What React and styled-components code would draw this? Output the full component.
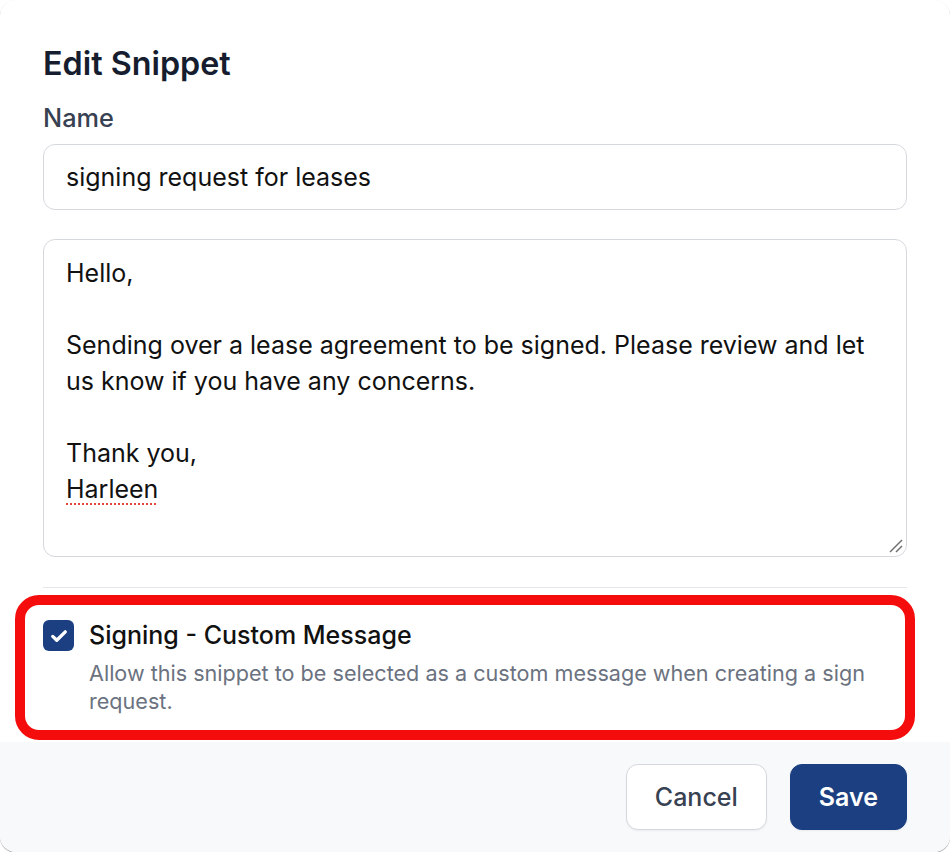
import React from "react";
import styled, { createGlobalStyle } from "styled-components";

const Global = createGlobalStyle`
  html, body { margin: 0; padding: 0; background: #ffffff; }
  body { font-family: Inter, "Noto Sans", sans-serif; -webkit-font-smoothing: antialiased; }
  * { box-sizing: border-box; }
`;

const Card = styled.div`
  width: 950px;
  height: 852px;
  background: #ffffff;
  border-radius: 16px;
  box-shadow: 0 1px 1px rgba(0, 0, 0, 0.35), 0 0 1px rgba(0, 0, 0, 0.06);
  display: flex;
  flex-direction: column;
  overflow: hidden;
`;

const Body = styled.div`
  padding: 44px 43px 27px;
  display: flex;
  flex-direction: column;
`;

const Title = styled.h2`
  margin: 0;
  font-size: 32.3px;
  line-height: 40px;
  font-weight: 600;
  color: #161d2e;
`;

const Label = styled.label`
  margin-top: 18px;
  font-size: 25.3px;
  line-height: 32px;
  font-weight: 500;
  color: #374151;
`;

const TextInput = styled.input`
  margin-top: 10px;
  height: 66px;
  padding: 14px 22px;
  border: 1px solid #d5d8de;
  border-radius: 12px;
  font-family: inherit;
  font-size: 25px;
  line-height: 36px;
  color: #111111;
  background: #fff;
  outline: none;
`;

const MessageBox = styled.div`
  position: relative;
  margin-top: 29px;
  height: 318px;
  padding: 15px 22px;
  border: 1px solid #d5d8de;
  border-radius: 12px;
  font-size: 25px;
  line-height: 36px;
  color: #111111;
  white-space: pre-wrap;
`;

const Misspelled = styled.span`
  text-decoration: underline dotted #e0463c;
  text-decoration-thickness: 2px;
  text-underline-offset: 5px;
`;

const Grip = styled.svg`
  position: absolute;
  right: 2px;
  bottom: 2px;
`;

const Divider = styled.hr`
  margin: 30px 0 0;
  border: 0;
  border-top: 1px solid #e5e7eb;
`;

const OptionBlock = styled.div`
  position: relative;
  margin-top: 31px;
  display: grid;
  grid-template-columns: 31px 1fr;
  column-gap: 15px;
`;

const Highlight = styled.div`
  position: absolute;
  left: -28px;
  right: -8px;
  top: -24px;
  bottom: -25px;
  border: 10px solid #f50d0d;
  border-radius: 24px;
  pointer-events: none;
`;

const CheckBox = styled.span`
  width: 31px;
  height: 31px;
  margin-top: 1px;
  border-radius: 6px;
  background: #1b3f80;
  display: flex;
  align-items: center;
  justify-content: center;
`;

const OptionText = styled.div`
  display: flex;
  flex-direction: column;
  gap: 8px;
`;

const OptionTitle = styled.div`
  font-size: 25px;
  line-height: 32px;
  font-weight: 500;
  color: #111111;
`;

const OptionDesc = styled.div`
  font-size: 21.6px;
  line-height: 28px;
  color: #6b7280;
`;

const Footer = styled.div`
  margin-top: auto;
  background: #f8f9fb;
  padding: 22px 43px;
  display: flex;
  justify-content: flex-end;
  gap: 23px;
`;

const Button = styled.button`
  height: 66px;
  padding: 0 28px;
  border-radius: 12px;
  font-family: inherit;
  font-size: 25px;
  font-weight: ${(p) => (p.$primary ? 600 : 500)};
  color: ${(p) => (p.$primary ? "#ffffff" : "#374151")};
  background: ${(p) => (p.$primary ? "#1b3f80" : "#ffffff")};
  border: 1px solid ${(p) => (p.$primary ? "#1b3f80" : "#d5d8de")};
  box-shadow: 0 1px 2px rgba(0, 0, 0, 0.06);
  cursor: pointer;
`;

export default function App() {
  return (
    <>
      <Global />
      <Card>
        <Body>
          <Title>Edit Snippet</Title>
          <Label htmlFor="snippet-name">Name</Label>
          <TextInput id="snippet-name" defaultValue="signing request for leases" />
          <MessageBox>
            {"Hello,\n\nSending over a lease agreement to be signed. Please review and let us know if you have any concerns.\n\nThank you,\n"}
            <Misspelled>Harleen</Misspelled>
            <Grip width="16" height="16" viewBox="0 0 16 16">
              <line x1="2" y1="14" x2="14" y2="2" stroke="#6e6e6e" strokeWidth="1.5" />
              <line x1="8" y1="14" x2="14" y2="8" stroke="#6e6e6e" strokeWidth="1.5" />
            </Grip>
          </MessageBox>
          <Divider />
          <OptionBlock>
            <Highlight />
            <CheckBox>
              <svg width="20" height="20" viewBox="0 0 24 24" fill="none">
                <path d="M4.5 12.5l4.8 4.6L19.5 7" stroke="#fff" strokeWidth="4" strokeLinecap="round" strokeLinejoin="round" />
              </svg>
            </CheckBox>
            <OptionText>
              <OptionTitle>Signing - Custom Message</OptionTitle>
              <OptionDesc>
                Allow this snippet to be selected as a custom message when creating a sign request.
              </OptionDesc>
            </OptionText>
          </OptionBlock>
        </Body>
        <Footer>
          <Button>Cancel</Button>
          <Button $primary>Save</Button>
        </Footer>
      </Card>
    </>
  );
}
